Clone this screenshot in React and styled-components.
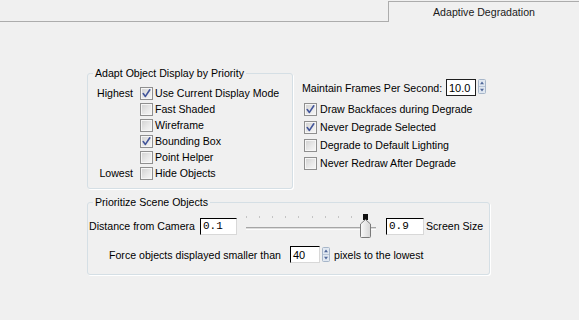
import React from 'react';
import styled, { createGlobalStyle } from 'styled-components';

const GlobalStyle = createGlobalStyle`
  html, body {
    margin: 0;
    padding: 0;
    background: #f0f0f0;
  }
`;

const Window = styled.div`
  width: 579px;
  height: 320px;
  overflow: hidden;
  background: #f0f0f0;
  font-family: "Liberation Sans", Arial, sans-serif;
  font-size: 10.6px;
  color: #000;
`;

const TabStrip = styled.div`
  display: flex;
  height: 22px;
`;

const TabFiller = styled.div`
  flex: 1;
  border-bottom: 1px solid #acacac;
`;

const Tab = styled.div`
  width: 190px;
  margin-top: 1px;
  border-top: 1px solid #acacac;
  border-left: 1px solid #acacac;
  display: flex;
  align-items: center;
  justify-content: center;
  color: #1a1a1a;
`;

const Body = styled.div`
  padding-left: 87px;
`;

const TopRow = styled.div`
  display: flex;
  align-items: flex-start;
  margin-top: 51px;
`;

const GroupBox = styled.div`
  box-sizing: border-box;
  width: ${p => p.width}px;
  margin-top: ${p => p.top || 0}px;
  border: 1px solid #d5dfe5;
  border-radius: 3px;
  box-shadow: 1px 1px 0 #fff;
  padding: 0 0 ${p => p.bottom}px 0;
`;

const Legend = styled.div`
  display: table;
  margin: -8px 0 0 5px;
  padding: 0 2px;
  line-height: 14px;
  background: #f0f0f0;
`;

const PriorityList = styled.div`
  padding-top: 5px;
`;

const PriorityRow = styled.div`
  display: flex;
  align-items: center;
  height: 16px;
`;

const PriorityLabel = styled.span`
  width: 45px;
  margin-right: 7px;
  text-align: right;
`;

const Box = styled.span`
  box-sizing: border-box;
  width: 13px;
  height: 13px;
  flex: none;
  border: 1px solid #8f8f8f;
  background: linear-gradient(135deg, #d0d0d0 0%, #e8e8e8 55%, #f8f8f8 100%);
  box-shadow: inset 0 0 0 1px #f6f6f6;
  margin-left: ${p => p.indent || 0}px;
  margin-right: ${p => p.gap || 3}px;
  display: flex;
  align-items: center;
  justify-content: center;
`;

const RightColumn = styled.div`
  margin-left: 9px;
  margin-top: 6px;
`;

const SpinRow = styled.div`
  display: flex;
  align-items: flex-start;
  height: 17px;
`;

const FieldLabel = styled.span`
  width: ${p => p.width}px;
  flex: none;
  align-self: center;
  white-space: nowrap;
`;

const OptionList = styled.div`
  margin-top: 4px;
`;

const OptionRow = styled.div`
  display: flex;
  align-items: center;
  height: 18px;
`;

const NumberField = styled.div`
  box-sizing: border-box;
  width: ${p => p.width}px;
  height: ${p => p.height || 17}px;
  flex: none;
  background: #fff;
  border: 1px solid;
  border-color: ${p => (p.focused ? '#1e1e1e' : '#000 #d8d8d8 #d8d8d8 #000')};
  padding-left: 2px;
  display: flex;
  align-items: center;
  font-family: ${p => (p.mono ? '"Liberation Mono", "DejaVu Sans Mono", monospace' : 'inherit')};
  font-size: ${p => (p.mono ? '11px' : '11px')};
`;

const SpinnerWrap = styled.span`
  margin-left: 2px;
  margin-right: ${p => p.gap || 0}px;
  display: flex;
  flex: none;
`;

const SceneList = styled.div`
  padding-top: 5px;
`;

const SceneRow = styled.div`
  display: flex;
  align-items: center;
  height: ${p => p.height}px;
  margin-top: ${p => p.top || 0}px;
  padding-left: ${p => p.indent}px;
`;

const SliderTrackArea = styled.div`
  position: relative;
  width: 130px;
  height: 24px;
  margin: 0 10px 0 9px;
  flex: none;
`;

const Ticks = styled.div`
  display: flex;
  justify-content: space-between;
  width: 119px;
  padding-top: 2px;
`;

const Tick = styled.span`
  width: 1px;
  height: 2px;
  background: #c4c4c4;
`;

const Track = styled.div`
  margin-top: 9px;
  height: 1px;
  border-top: 1px solid #a6a6a6;
  border-bottom: 1px solid #fdfdfd;
  background: #dcdcdc;
`;

const Thumb = styled.svg`
  position: absolute;
  top: 0;
`;

const Suffix = styled.span`
  margin-left: 2px;
`;

const Check = () => (
  <svg width="11" height="11" viewBox="0 0 11 11">
    <path d="M2.2 5.6 L4.4 8.4 L8.8 1.8" fill="none" stroke="#42559a" strokeWidth="1.6" strokeLinecap="round" strokeLinejoin="round" />
  </svg>
);

const CheckBox = ({ checked, indent, gap }) => (
  <Box indent={indent} gap={gap}>{checked && <Check />}</Box>
);

const Spinner = ({ gap }) => (
  <SpinnerWrap gap={gap}>
    <svg width="8" height="15" viewBox="0 0 8 15">
      <rect x="0.5" y="0.5" width="7" height="14" rx="1" fill="#e1e8f1" stroke="#a7b6c9" />
      <line x1="1" y1="7.5" x2="7" y2="7.5" stroke="#b8c5d6" />
      <path d="M4 2.5 L6 5.2 L2 5.2 Z" fill="#51689a" />
      <path d="M4 12.5 L6 9.8 L2 9.8 Z" fill="#51689a" />
    </svg>
  </SpinnerWrap>
);

const Slider = ({ value, steps }) => {
  const spacing = 119 / (steps - 1);
  return (
    <SliderTrackArea>
      <Ticks>
        {Array.from({ length: steps }).map((_, i) => <Tick key={i} />)}
      </Ticks>
      <Track />
      <Thumb width="11" height="24" viewBox="0 0 11 24" style={{ left: value * spacing - 5 }}>
        <defs>
          <linearGradient id="thumbFill" x1="0" y1="0" x2="1" y2="0">
            <stop offset="0" stopColor="#fafafa" />
            <stop offset="1" stopColor="#d6d6d6" />
          </linearGradient>
        </defs>
        <rect x="3" y="0" width="5" height="6" fill="#111" />
        <path d="M0.5 10 L5.5 5.5 L10.5 10 L10.5 22.5 Q10.5 23.5 9.5 23.5 L1.5 23.5 Q0.5 23.5 0.5 22.5 Z" fill="url(#thumbFill)" stroke="#7a7a7a" />
      </Thumb>
    </SliderTrackArea>
  );
};

const priorities = [
  { label: 'Highest', text: 'Use Current Display Mode', checked: true },
  { label: '', text: 'Fast Shaded', checked: false },
  { label: '', text: 'Wireframe', checked: false },
  { label: '', text: 'Bounding Box', checked: true },
  { label: '', text: 'Point Helper', checked: false },
  { label: 'Lowest', text: 'Hide Objects', checked: false },
];

const options = [
  { text: 'Draw Backfaces during Degrade', checked: true },
  { text: 'Never Degrade Selected', checked: true },
  { text: 'Degrade to Default Lighting', checked: false },
  { text: 'Never Redraw After Degrade', checked: false },
];

export default function App() {
  return (
    <Window>
      <GlobalStyle />
      <TabStrip>
        <TabFiller />
        <Tab>Adaptive Degradation</Tab>
      </TabStrip>
      <Body>
        <TopRow>
          <GroupBox width={206} bottom={7}>
            <Legend>Adapt Object Display by Priority</Legend>
            <PriorityList>
              {priorities.map(p => (
                <PriorityRow key={p.text}>
                  <PriorityLabel>{p.label}</PriorityLabel>
                  <CheckBox checked={p.checked} gap={2} />
                  <span>{p.text}</span>
                </PriorityRow>
              ))}
            </PriorityList>
          </GroupBox>
          <RightColumn>
            <SpinRow>
              <FieldLabel width={144}>Maintain Frames Per Second:</FieldLabel>
              <NumberField width={30} focused>10.0</NumberField>
              <Spinner />
            </SpinRow>
            <OptionList>
              {options.map(o => (
                <OptionRow key={o.text}>
                  <CheckBox checked={o.checked} indent={2} gap={3} />
                  <span>{o.text}</span>
                </OptionRow>
              ))}
            </OptionList>
          </RightColumn>
        </TopRow>
        <GroupBox width={403} top={13} bottom={11}>
          <Legend>Prioritize Scene Objects</Legend>
          <SceneList>
            <SceneRow height={24} indent={1}>
              <FieldLabel width={111}>Distance from Camera</FieldLabel>
              <NumberField width={37} mono>0.1</NumberField>
              <Slider value={9} steps={10} />
              <NumberField width={38} mono>0.9</NumberField>
              <Suffix>Screen Size</Suffix>
            </SceneRow>
            <SceneRow height={17} top={8} indent={21}>
              <FieldLabel width={181}>Force objects displayed smaller than</FieldLabel>
              <NumberField width={30}>40</NumberField>
              <Spinner gap={4} />
              <span>pixels to the lowest</span>
            </SceneRow>
          </SceneList>
        </GroupBox>
      </Body>
    </Window>
  );
}
